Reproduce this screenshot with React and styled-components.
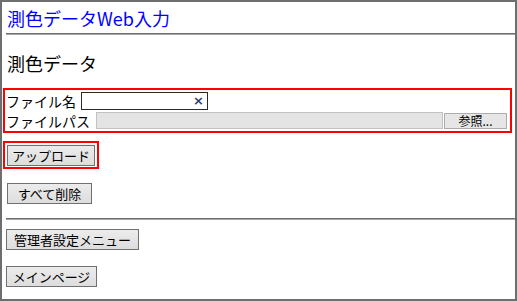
import React from "react";
import styled, { createGlobalStyle } from "styled-components";

const Global = createGlobalStyle`
  body {
    margin: 0;
    background: #fff;
  }
`;

const Frame = styled.div`
  width: 517px;
  height: 301px;
  box-sizing: border-box;
  border: 2px solid #6e6e6e;
  background: #fff;
  font-family: "Noto Sans CJK JP", "Noto Sans", sans-serif;
  color: #000;
  display: flex;
  flex-direction: column;
  align-items: flex-start;
`;

const Title = styled.div`
  margin: 4px 0 0 5px;
  font-size: 18px;
  line-height: 24px;
  color: #0000ff;
`;

const Rule = styled.div`
  align-self: stretch;
  margin: ${props => props.top}px 0 0 4px;
  height: 0;
  border-top: 1px solid #6e6e6e;
  border-bottom: 1px solid #a8a8a8;
`;

const Heading = styled.h2`
  margin: 16px 0 0 5px;
  font-size: 18px;
  font-weight: normal;
  line-height: 24px;
`;

const FileBox = styled.div`
  align-self: stretch;
  margin: 13px 3px 0 1px;
  border: 2px solid #ff0000;
  padding: 2px 3px 2px 1px;
  display: flex;
  flex-direction: column;
  gap: 2px;
`;

const Row = styled.div`
  display: flex;
  align-items: center;
  height: ${props => props.h}px;
`;

const Label = styled.span`
  font-size: 14px;
  line-height: 16px;
  margin-right: ${props => props.gap}px;
  white-space: nowrap;
`;

const InputWrap = styled.div`
  position: relative;
  width: 127px;
  height: 18px;
`;

const TextInput = styled.input`
  display: block;
  box-sizing: border-box;
  width: 100%;
  height: 100%;
  margin: 0;
  border: 1px solid #2a2a2a;
  padding: 0 18px 0 3px;
  font-size: 12px;
  outline: none;
`;

const Clear = styled.span`
  position: absolute;
  right: 4px;
  top: 1px;
  font-family: "DejaVu Sans", sans-serif;
  font-size: 13px;
  font-weight: bold;
  line-height: 16px;
  color: #2b3f6b;
`;

const PathField = styled.div`
  flex: 1;
  box-sizing: border-box;
  height: 17px;
  background: #e4e4e4;
  border: 1px solid #c2c2c2;
`;

const BrowseButton = styled.button`
  box-sizing: border-box;
  width: 63px;
  height: 16px;
  margin-left: 1px;
  padding: 0;
  border: 1px solid #adadad;
  background: #e6e6e6;
  font-family: inherit;
  font-size: 12px;
  line-height: 14px;
  color: #000;
`;

const Highlight = styled.div`
  display: flex;
  margin: 8px 0 0 1px;
  border: 2px solid #ff0000;
  padding: 2px 2px 1px 2px;
`;

const Button = styled.button`
  box-sizing: border-box;
  width: ${props => props.w}px;
  height: 21px;
  margin: ${props => props.top || 0}px 0 0 ${props => props.left || 0}px;
  padding: 0;
  border: 1px solid #707070;
  background: linear-gradient(#ececec, #dddddd);
  font-family: inherit;
  font-size: 13px;
  line-height: 19px;
  color: #000;
`;

export default function App() {
  return (
    <>
      <Global />
      <Frame>
        <Title>測色データWeb入力</Title>
        <Rule top={3} />
        <Heading>測色データ</Heading>
        <FileBox>
          <Row h={18}>
            <Label gap={5}>ファイル名</Label>
            <InputWrap>
              <TextInput type="text" />
              <Clear>×</Clear>
            </InputWrap>
          </Row>
          <Row h={17}>
            <Label gap={6}>ファイルパス</Label>
            <PathField />
            <BrowseButton>参照...</BrowseButton>
          </Row>
        </FileBox>
        <Highlight>
          <Button w={88}>アップロード</Button>
        </Highlight>
        <Button w={85} top={14} left={5}>すべて削除</Button>
        <Rule top={14} />
        <Button w={133} top={9} left={4}>管理者設定メニュー</Button>
        <Button w={91} top={16} left={4}>メインページ</Button>
      </Frame>
    </>
  );
}
